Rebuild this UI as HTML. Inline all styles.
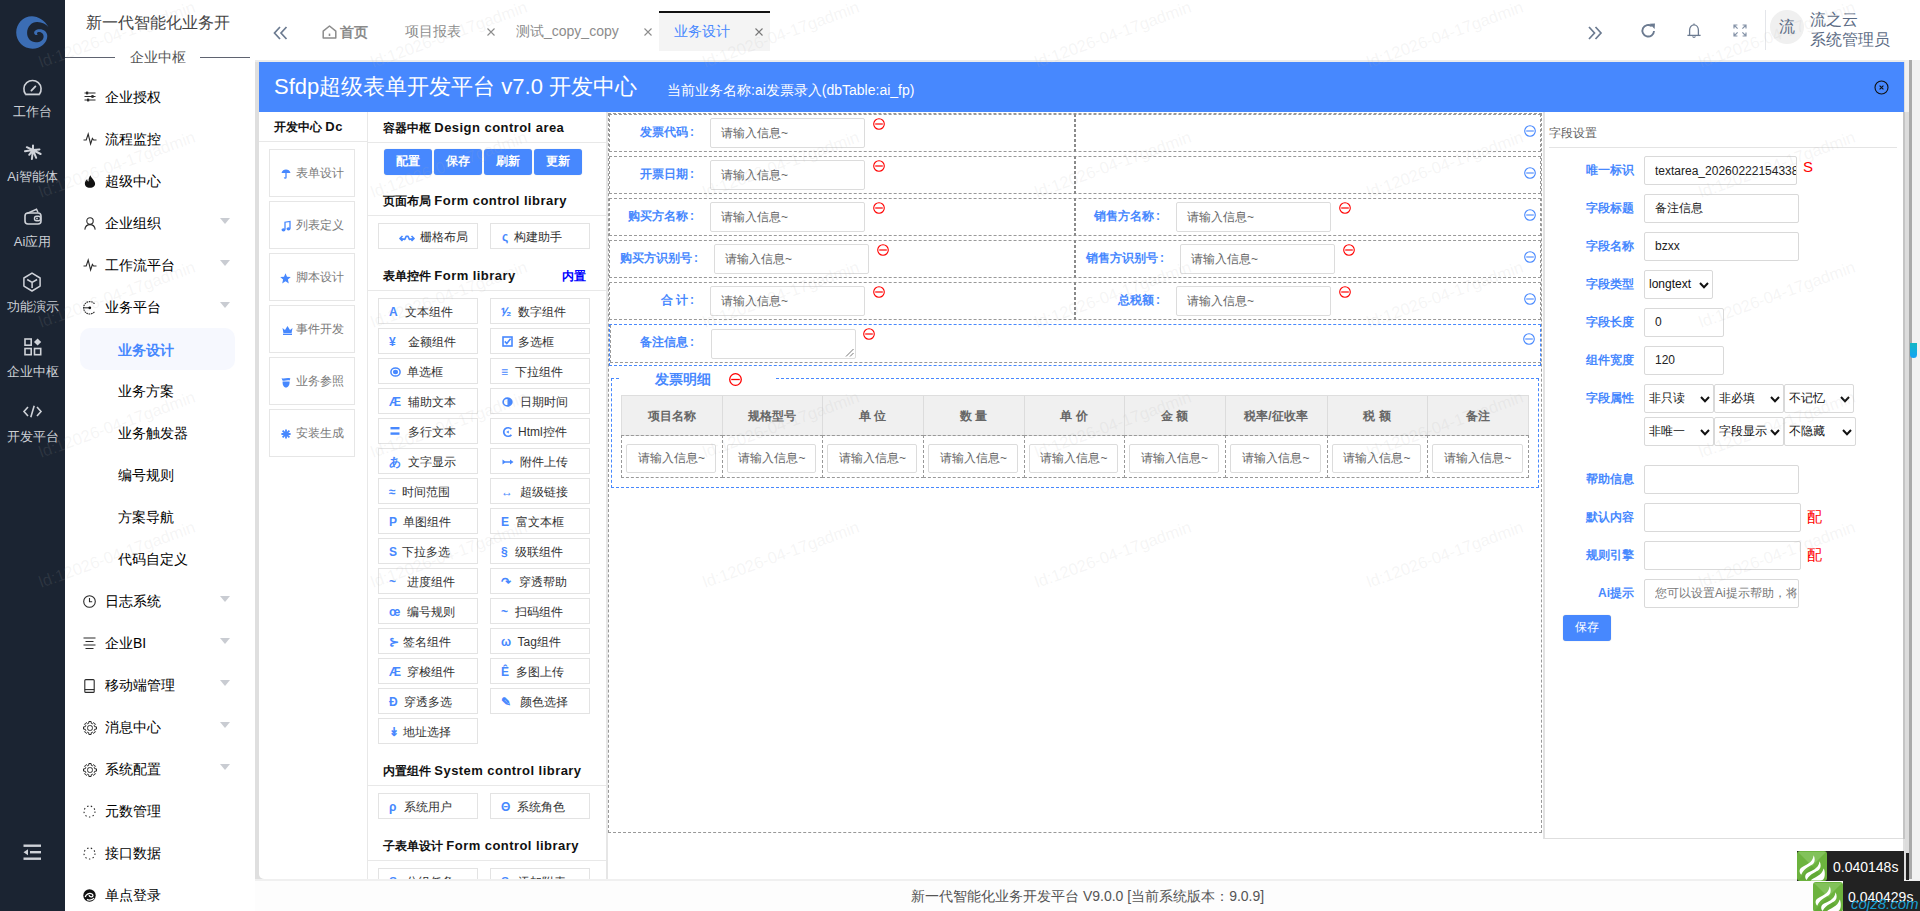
<!DOCTYPE html>
<html><head><meta charset="utf-8">
<style>
*{box-sizing:border-box;margin:0;padding:0}
html,body{width:1920px;height:911px;overflow:hidden;background:#fff;font-family:"Liberation Sans",sans-serif;color:#222}
.a{position:absolute}
.t{position:absolute;white-space:nowrap;line-height:1}
svg{position:absolute;overflow:visible}
/* dark sidebar */
#side{left:0;top:0;width:65px;height:911px;background:#1b2432}
.si{color:#cdd0d6;font-size:13px;width:65px;text-align:center;left:0}
/* secondary sidebar */
.mi{font-size:14px;color:#000;left:105px}
.sm{font-size:14px;color:#000;left:118px}
.arr{position:absolute;left:220px;width:0;height:0;border-left:5.5px solid transparent;border-right:5.5px solid transparent;border-top:6px solid #c9ccd2}
/* header */
.tab{font-size:14px;color:#8c8c8c}
.tx{font-size:14px;color:#8c8c8c}
</style></head><body>

<!-- ============ DARK SIDEBAR ============ -->
<div id="side" class="a">
  <svg style="left:12px;top:12px" width="40" height="40" viewBox="0 0 40 40">
    <path d="M36.4 14.9 C33 8.5 26 4.2 20 4.2 C11.2 4.2 4.2 11.5 4.2 20.5 C4.2 29.5 11.5 36.7 20.5 36.7 C28.5 36.7 35.3 31 35.3 24 C35.3 19.8 31.5 17.2 27.5 17.3 C24 17.4 21.8 19.2 22.2 21.2 C22.5 22.8 24.4 23.6 25.8 22.6 C24.9 22.2 24.6 21.2 25.4 20.6 C27.6 19.2 31.6 21 31.6 24.5 C31.6 28.2 28.2 30.3 24 30.3 C19 30.3 15.1 26.5 15.1 21 C15.1 14.5 19.5 10 25 9.9 C30 9.8 34 12 36.4 14.9 Z" fill="#3b6db4"/>
  </svg>
  <!-- gauge -->
  <svg style="left:23px;top:79px" width="19" height="17" viewBox="0 0 19 17">
    <path d="M2.6 15.2 A8.6 8.6 0 1 1 16.4 15.2" fill="none" stroke="#cfd2d8" stroke-width="1.6"/>
    <path d="M2.2 15.4 H16.8" stroke="#cfd2d8" stroke-width="1.8"/>
    <path d="M8.4 11.6 L12.4 7.4" stroke="#cfd2d8" stroke-width="1.8" stroke-linecap="round"/>
  </svg>
  <div class="t si" style="top:105px">工作台</div>
  <!-- palm -->
  <svg style="left:18px;top:138px" width="30" height="26" viewBox="0 0 30 26">
    <path d="M14.9 12 L7 13.2 M14.9 12 L8.8 9.2 M14.9 12 L15 7.5 M14.9 12 L21.5 11.4 M14.9 12 L22.6 16 M14.9 12 L18.2 19.8 M14.9 12 L13.9 21 M14.9 12 L11.2 16.8" stroke="#d0d3da" stroke-width="2" stroke-linecap="round"/>
  </svg>
  <div class="t si" style="top:170px">Ai智能体</div>
  <!-- wallet -->
  <svg style="left:24px;top:208px" width="18" height="17" viewBox="0 0 18 17">
    <path d="M3 5.5 L12.5 1.2 L14 4.5" fill="none" stroke="#cfd2d8" stroke-width="1.5"/>
    <rect x="1" y="5" width="16" height="11" rx="3" fill="none" stroke="#cfd2d8" stroke-width="1.6"/>
    <rect x="10.5" y="8.2" width="6" height="4.6" rx="2" fill="none" stroke="#cfd2d8" stroke-width="1.4"/>
    <circle cx="13" cy="10.5" r="0.9" fill="#cfd2d8"/>
  </svg>
  <div class="t si" style="top:235px">Ai应用</div>
  <!-- cube -->
  <svg style="left:23px;top:272px" width="18" height="20" viewBox="0 0 18 20"><path d="M9 1.1 L17.1 6 V14.1 L9 19 L0.9 14.1 V6 Z" fill="none" stroke="#d0d3da" stroke-width="1.5" stroke-linejoin="round"/><path d="M4.2 7.5 L9.1 10.3 L14.1 7.5 M9.1 10.3 V16" fill="none" stroke="#d0d3da" stroke-width="1.5"/></svg>
  <div class="t si" style="top:300px">功能演示</div>
  <!-- apps -->
  <svg style="left:24px;top:338px" width="18" height="18" viewBox="0 0 18 18">
    <rect x="1" y="1" width="6.2" height="6.2" fill="none" stroke="#cfd2d8" stroke-width="1.6"/>
    <rect x="1" y="10.5" width="6.2" height="6.2" fill="none" stroke="#cfd2d8" stroke-width="1.6"/>
    <rect x="10.5" y="10.5" width="6.2" height="6.2" fill="none" stroke="#cfd2d8" stroke-width="1.6"/>
    <path d="M13.6 0.4 L17.2 4 L13.6 7.6 L10 4 Z" fill="#cfd2d8"/>
  </svg>
  <div class="t si" style="top:365px">企业中枢</div>
  <!-- code -->
  <svg style="left:23px;top:405px" width="19" height="13" viewBox="0 0 19 13">
    <path d="M5 2 L1 6.5 L5 11 M14 2 L18 6.5 L14 11 M11.2 0.8 L7.8 12.2" fill="none" stroke="#cfd2d8" stroke-width="1.6"/>
  </svg>
  <div class="t si" style="top:430px">开发平台</div>
  <!-- menu fold -->
  <svg style="left:23px;top:844px" width="19" height="17" viewBox="0 0 19 17">
    <rect x="0.5" y="0.5" width="17.5" height="2.4" fill="#cfd2d8"/>
    <rect x="7" y="7" width="11" height="2.4" fill="#cfd2d8"/>
    <rect x="0.5" y="13.5" width="17.5" height="2.4" fill="#cfd2d8"/>
    <path d="M0.5 8.2 L5 5.2 V11.2 Z" fill="#cfd2d8"/>
  </svg>
</div>

<!-- ============ SECONDARY SIDEBAR ============ -->
<div class="t" style="left:86px;top:15px;font-size:16px;color:#444">新一代智能化业务开</div>
<div class="a" style="left:65px;top:57px;width:50px;height:1px;background:#5f6370"></div>
<div class="t" style="left:130px;top:50px;font-size:14px;color:#555">企业中枢</div>
<div class="a" style="left:200px;top:57px;width:50px;height:1px;background:#5f6370"></div>

<div class="t mi" style="top:90px">企业授权</div>
<svg style="left:84px;top:91px" width="12" height="11" viewBox="0 0 12 11"><path d="M0.5 2H11.5M0.5 5.5H11.5M0.5 9H11.5" stroke="#2a2a2a" stroke-width="1.1"/><rect x="2" y="0.6" width="2.2" height="2.8" fill="#2a2a2a"/><rect x="7.4" y="4.1" width="2.2" height="2.8" fill="#2a2a2a"/><rect x="3" y="7.6" width="2.2" height="2.8" fill="#2a2a2a"/></svg>
<div class="t mi" style="top:132px">流程监控</div>
<svg style="left:83px;top:133px" width="14" height="12" viewBox="0 0 14 12"><path d="M0.5 7 H3.2 L5.2 1 L7.6 11 L9.4 5.5 L10.6 7 H13.5" fill="none" stroke="#2a2a2a" stroke-width="1.1"/></svg>
<div class="t mi" style="top:174px">超级中心</div>
<svg style="left:84px;top:175px" width="12" height="13" viewBox="0 0 12 13"><path d="M6.5 0.3 C7 3 10.2 4.6 11 8 C11.6 11 9.2 12.8 6 12.8 C2.6 12.8 0.5 10.8 0.9 7.8 C1.2 5.8 2.4 4.8 3.2 4 C3.2 5.4 3.8 6.2 4.6 6.6 C4.2 4.2 5.2 2 6.5 0.3 Z" fill="#111"/></svg>
<div class="t mi" style="top:216px">企业组织</div>
<svg style="left:84px;top:217px" width="12" height="13" viewBox="0 0 12 13"><circle cx="6" cy="4" r="3.2" fill="none" stroke="#2a2a2a" stroke-width="1.1"/><path d="M0.8 12.6 C1.2 9.4 3.2 7.6 6 7.6 C8.8 7.6 10.8 9.4 11.2 12.6" fill="none" stroke="#2a2a2a" stroke-width="1.1"/></svg>
<div class="arr" style="top:218px"></div>
<div class="t mi" style="top:258px">工作流平台</div>
<svg style="left:83px;top:259px" width="14" height="12" viewBox="0 0 14 12"><path d="M0.5 7 H3.2 L5.2 1 L7.6 11 L9.4 5.5 L10.6 7 H13.5" fill="none" stroke="#2a2a2a" stroke-width="1.1"/></svg>
<div class="arr" style="top:260px"></div>
<div class="t mi" style="top:300px">业务平台</div>
<svg style="left:83px;top:301px" width="14" height="14" viewBox="0 0 14 14"><path d="M11.5 2.75 A6.2 6.2 0 1 0 11.5 10.85" fill="none" stroke="#2a2a2a" stroke-width="1.1" stroke-dasharray="1.6 0.7"/><path d="M0.6 6.8 H6.5" stroke="#2a2a2a" stroke-width="1.1"/><circle cx="6.8" cy="6.8" r="1.4" fill="#111"/></svg>
<div class="arr" style="top:302px"></div>
<div class="a" style="left:80px;top:328px;width:155px;height:42px;border-radius:10px;background:#f6f8fe"></div>
<div class="t" style="left:118px;top:343px;font-size:14px;color:#4788fe;font-weight:bold">业务设计</div>
<div class="t sm" style="top:384px">业务方案</div>
<div class="t sm" style="top:426px">业务触发器</div>
<div class="t sm" style="top:468px">编号规则</div>
<div class="t sm" style="top:510px">方案导航</div>
<div class="t sm" style="top:552px">代码自定义</div>
<div class="t mi" style="top:594px">日志系统</div>
<svg style="left:83px;top:595px" width="13" height="13" viewBox="0 0 13 13"><circle cx="6.5" cy="6.5" r="5.8" fill="none" stroke="#2a2a2a" stroke-width="1.1"/><path d="M6.5 3 V6.8 H9.2" fill="none" stroke="#2a2a2a" stroke-width="1.1"/></svg>
<div class="arr" style="top:596px"></div>
<div class="t mi" style="top:636px">企业BI</div>
<svg style="left:83px;top:637px" width="13" height="13" viewBox="0 0 13 13"><path d="M0.5 1H12.5M2.5 4.5H10.5M0.5 8H12.5M2.5 11.5H10.5" stroke="#2a2a2a" stroke-width="1.1"/></svg>
<div class="arr" style="top:638px"></div>
<div class="t mi" style="top:678px">移动端管理</div>
<svg style="left:84px;top:679px" width="11" height="14" viewBox="0 0 11 14"><rect x="0.8" y="0.6" width="9.4" height="12.8" rx="1" fill="none" stroke="#2a2a2a" stroke-width="1.1"/><path d="M0.8 10.6 H10.2" stroke="#2a2a2a" stroke-width="1.1"/></svg>
<div class="arr" style="top:680px"></div>
<div class="t mi" style="top:720px">消息中心</div>
<svg style="left:83px;top:721px" width="14" height="14" viewBox="0 0 14 14"><path d="M5.74 2.26 L5.88 0.50 L8.12 0.50 L8.26 2.26 L9.46 2.76 L10.81 1.61 L12.39 3.19 L11.24 4.54 L11.74 5.74 L13.50 5.88 L13.50 8.12 L11.74 8.26 L11.24 9.46 L12.39 10.81 L10.81 12.39 L9.46 11.24 L8.26 11.74 L8.12 13.50 L5.88 13.50 L5.74 11.74 L4.54 11.24 L3.19 12.39 L1.61 10.81 L2.76 9.46 L2.26 8.26 L0.50 8.12 L0.50 5.88 L2.26 5.74 L2.76 4.54 L1.61 3.19 L3.19 1.61 L4.54 2.76 Z" fill="none" stroke="#2a2a2a" stroke-width="1" stroke-linejoin="round"/><rect x="4.6" y="4.6" width="4.8" height="4.8" rx="1.8" fill="none" stroke="#2a2a2a" stroke-width="1"/></svg>
<div class="arr" style="top:722px"></div>
<div class="t mi" style="top:762px">系统配置</div>
<svg style="left:83px;top:763px" width="14" height="14" viewBox="0 0 14 14"><path d="M5.74 2.26 L5.88 0.50 L8.12 0.50 L8.26 2.26 L9.46 2.76 L10.81 1.61 L12.39 3.19 L11.24 4.54 L11.74 5.74 L13.50 5.88 L13.50 8.12 L11.74 8.26 L11.24 9.46 L12.39 10.81 L10.81 12.39 L9.46 11.24 L8.26 11.74 L8.12 13.50 L5.88 13.50 L5.74 11.74 L4.54 11.24 L3.19 12.39 L1.61 10.81 L2.76 9.46 L2.26 8.26 L0.50 8.12 L0.50 5.88 L2.26 5.74 L2.76 4.54 L1.61 3.19 L3.19 1.61 L4.54 2.76 Z" fill="none" stroke="#2a2a2a" stroke-width="1" stroke-linejoin="round"/><rect x="4.6" y="4.6" width="4.8" height="4.8" rx="1.8" fill="none" stroke="#2a2a2a" stroke-width="1"/></svg>
<div class="arr" style="top:764px"></div>
<div class="t mi" style="top:804px">元数管理</div>
<svg style="left:83px;top:805px" width="13" height="13" viewBox="0 0 13 13"><circle cx="6.5" cy="6.5" r="5.5" fill="none" stroke="#2a2a2a" stroke-width="1.1" stroke-dasharray="1.4 2.4"/></svg>
<div class="t mi" style="top:846px">接口数据</div>
<svg style="left:83px;top:847px" width="13" height="13" viewBox="0 0 13 13"><circle cx="6.5" cy="6.5" r="5.5" fill="none" stroke="#2a2a2a" stroke-width="1.1" stroke-dasharray="1.4 2.4"/></svg>
<div class="t mi" style="top:888px">单点登录</div>
<svg style="left:83px;top:889px" width="13" height="13" viewBox="0 0 13 13"><circle cx="6.5" cy="6.5" r="6.2" fill="#111"/><path d="M2.2 8 C3 5 6.5 3.6 9 5 C10.4 5.8 10.2 7.6 8.6 7.8 C7 8 5.8 7 6.4 6 M4 10.4 C6 11.6 9.6 11 11 9" fill="none" stroke="#fff" stroke-width="1.3"/></svg>

<!-- light strip -->
<div class="a" style="left:255px;top:60px;width:1650px;height:820px;background:#dfdfdf"></div>

<!-- ============ HEADER ============ -->
<div class="a" style="left:255px;top:60px;width:1665px;height:2px;background:#ececec"></div>


<!-- collapse « -->
<svg style="left:273px;top:26px" width="15" height="14" viewBox="0 0 15 14"><path d="M7 1 L1.5 7 L7 13 M13.5 1 L8 7 L13.5 13" fill="none" stroke="#6b7a90" stroke-width="1.7"/></svg>
<!-- home -->
<svg style="left:322px;top:25px" width="15" height="14" viewBox="0 0 15 14"><path d="M1.2 13 V6.2 L7.5 1 L13.8 6.2 V13 Z" fill="none" stroke="#8c8c8c" stroke-width="1.5" stroke-linejoin="round"/><path d="M7.5 8.6 V11" stroke="#8c8c8c" stroke-width="1.6"/></svg>
<div class="t" style="left:340px;top:25px;font-size:14px;color:#8a8a8a;font-weight:bold">首页</div>
<div class="t tab" style="left:405px;top:24px">项目报表</div>
<svg style="left:487px;top:28px" width="8" height="8" viewBox="0 0 8 8"><path d="M0.5 0.5 L7.5 7.5 M7.5 0.5 L0.5 7.5" stroke="#8c8c8c" stroke-width="1.1"/></svg>
<div class="t tab" style="left:516px;top:24px">测试_copy_copy</div>
<svg style="left:644px;top:28px" width="8" height="8" viewBox="0 0 8 8"><path d="M0.5 0.5 L7.5 7.5 M7.5 0.5 L0.5 7.5" stroke="#8c8c8c" stroke-width="1.1"/></svg>
<div class="a" style="left:659px;top:11px;width:111px;height:40px;background:#f4f4f4;border-top:2px solid #111"></div>
<div class="t" style="left:674px;top:24px;font-size:14px;color:#4788fe">业务设计</div>
<svg style="left:755px;top:28px" width="8" height="8" viewBox="0 0 8 8"><path d="M0.5 0.5 L7.5 7.5 M7.5 0.5 L0.5 7.5" stroke="#777" stroke-width="1.1"/></svg>
<!-- right icons -->
<svg style="left:1588px;top:26px" width="14" height="14" viewBox="0 0 14 14"><path d="M1 1 L6.5 7 L1 13 M7.5 1 L13 7 L7.5 13" fill="none" stroke="#6b7a90" stroke-width="1.7"/></svg>
<svg style="left:1641px;top:23px" width="15" height="15" viewBox="0 0 15 15"><path d="M13 8 A5.8 5.8 0 1 1 10.8 3.2" fill="none" stroke="#6b7a90" stroke-width="1.9"/><path d="M8.6 0.8 L14 0.6 L13.6 6 Z" fill="#6b7a90"/></svg>
<svg style="left:1687px;top:23px" width="14" height="16" viewBox="0 0 14 16"><path d="M2.6 12.2 V7.2 C2.6 4 4.6 1.8 7 1.8 C9.4 1.8 11.4 4 11.4 7.2 V12.2" fill="none" stroke="#6b7a90" stroke-width="1.3"/><path d="M0.4 12.4 H13.6" stroke="#6b7a90" stroke-width="1.3"/><path d="M5.6 13.4 A1.5 1.5 0 0 0 8.4 13.4" fill="none" stroke="#6b7a90" stroke-width="1.2"/><path d="M7 0.6 V1.8" stroke="#6b7a90" stroke-width="1.2"/></svg>
<svg style="left:1733px;top:24px" width="14" height="13" viewBox="0 0 14 13"><path d="M1 4.4 V1 H4.4 M1 1 L4.6 4.6 M13 4.4 V1 H9.6 M13 1 L9.4 4.6 M1 8.6 V12 H4.4 M1 12 L4.6 8.4 M13 8.6 V12 H9.6 M13 12 L9.4 8.4" fill="none" stroke="#8593a8" stroke-width="1.2"/></svg>
<div class="a" style="left:1765px;top:10px;width:1px;height:40px;background:#e4e6ea"></div>
<div class="a" style="left:1770px;top:10px;width:34px;height:34px;border-radius:50%;background:#f0f0f0"></div>
<div class="t" style="left:1779px;top:19px;font-size:16px;color:#5b6b84">流</div>
<div class="t" style="left:1810px;top:12px;font-size:16px;color:#5b6b84">流之云</div>
<div class="t" style="left:1810px;top:32px;font-size:16px;color:#5b6b84">系统管理员</div>


<!-- ============ MAIN BOX ============ -->
<div class="a" style="left:259px;top:62px;width:1645px;height:50px;background:#4788fe"></div>
<div class="t" style="left:274px;top:76px;font-size:22px;color:#fff">Sfdp超级表单开发平台 v7.0 开发中心</div>
<div class="t" style="left:667px;top:83px;font-size:14px;color:#fff">当前业务名称:ai发票录入(dbTable:ai_fp)</div>
<svg style="left:1874px;top:80px" width="15" height="15" viewBox="0 0 15 15"><circle cx="7.5" cy="7.5" r="6.5" fill="none" stroke="#111" stroke-width="1.1"/><path d="M5.6 5.6 L9.4 9.4 M9.4 5.6 L5.6 9.4" stroke="#111" stroke-width="1.1"/></svg>
<!-- content bg white -->
<div class="a" style="left:259px;top:112px;width:1644px;height:767px;background:#fff;border-bottom-left-radius:5px"></div>

<!-- left dev panel -->
<div class="a" style="left:367px;top:112px;width:1px;height:768px;background:#e8e8e8"></div>
<div class="a" style="left:259px;top:141px;width:108px;height:1px;background:#e8e8e8"></div>
<div class="t" style="left:274px;top:120px;font-size:12px;font-weight:bold;color:#111">开发中心 <span style="font-size:13px;letter-spacing:0.45px">Dc</span></div>
<div class="a" style="left:269px;top:149px;width:86px;height:48px;border:1px solid #e6e6e6"></div>
<svg style="left:281px;top:169px" width="10" height="10" viewBox="0 0 10 10"><path d="M0.5 4 C1 1.5 3 0.4 5 0.4 C7 0.4 9 1.5 9.5 4 Z" fill="#4788fe"/><path d="M5 3.5 V8.4 C5 9.4 3.6 9.4 3.4 8.4" fill="none" stroke="#4788fe" stroke-width="1.3"/></svg>
<div class="t" style="left:296px;top:167px;font-size:12px;color:#7a7a7a">表单设计</div>
<div class="a" style="left:269px;top:201px;width:86px;height:48px;border:1px solid #e6e6e6"></div>
<svg style="left:281px;top:221px" width="10" height="11" viewBox="0 0 10 11"><path d="M4 8.5 V1.2 L9 0.4 V7.5" fill="none" stroke="#4788fe" stroke-width="1.3"/><ellipse cx="2.5" cy="8.8" rx="2" ry="1.6" fill="#4788fe"/><ellipse cx="7.5" cy="7.8" rx="2" ry="1.6" fill="#4788fe"/></svg>
<div class="t" style="left:296px;top:219px;font-size:12px;color:#7a7a7a">列表定义</div>
<div class="a" style="left:269px;top:253px;width:86px;height:48px;border:1px solid #e6e6e6"></div>
<svg style="left:280px;top:273px" width="11" height="11" viewBox="0 0 11 11"><path d="M5.5 0.3 L7 3.8 L10.8 4 L7.9 6.5 L8.8 10.4 L5.5 8.3 L2.2 10.4 L3.1 6.5 L0.2 4 L4 3.8 Z" fill="#4788fe"/></svg>
<div class="t" style="left:296px;top:271px;font-size:12px;color:#7a7a7a">脚本设计</div>
<div class="a" style="left:269px;top:305px;width:86px;height:48px;border:1px solid #e6e6e6"></div>
<svg style="left:282px;top:325px" width="11" height="10" viewBox="0 0 11 10"><path d="M0.5 3 L3 5 L5.5 1 L8 5 L10.5 3 L9.6 8 H1.4 Z" fill="#4788fe"/><rect x="1" y="8.6" width="9" height="1.4" fill="#4788fe"/></svg>
<div class="t" style="left:296px;top:323px;font-size:12px;color:#7a7a7a">事件开发</div>
<div class="a" style="left:269px;top:357px;width:86px;height:48px;border:1px solid #e6e6e6"></div>
<svg style="left:281px;top:377px" width="10" height="11" viewBox="0 0 10 11"><path d="M0.6 1 C3 2.5 6 0 9.4 1.4 L8.6 3.6 C6 2.6 3.6 4.6 1.4 3.4 Z M1.6 4.4 H8.6 C8.8 8 7.2 10.4 5 10.4 C2.8 10.4 1.4 8 1.6 4.4 Z" fill="#4788fe"/></svg>
<div class="t" style="left:296px;top:375px;font-size:12px;color:#7a7a7a">业务参照</div>
<div class="a" style="left:269px;top:409px;width:86px;height:48px;border:1px solid #e6e6e6"></div>
<svg style="left:281px;top:429px" width="10" height="10" viewBox="0 0 10 10"><path d="M5 0.4 V9.6 M0.4 5 H9.6 M1.6 1.6 L8.4 8.4 M8.4 1.6 L1.6 8.4" stroke="#4788fe" stroke-width="1.8"/></svg>
<div class="t" style="left:296px;top:427px;font-size:12px;color:#7a7a7a">安装生成</div>

<div class="a" style="left:606px;top:112px;width:2px;height:767px;background:#e6e6e6"></div>
<div class="t" style="left:383px;top:121px;font-size:12px;font-weight:bold;color:#111">容器中枢 <span style="font-size:13px;letter-spacing:0.45px">Design control area</span></div>
<div class="a" style="left:368px;top:142px;width:238px;height:1px;background:#e8e8e8"></div>
<div class="a" style="left:384px;top:149px;width:48px;height:26px;border-radius:3px;background:#4788fe;box-shadow:0 0 1px rgba(0,0,0,.25)"></div><div class="t" style="left:384px;top:155px;width:48px;text-align:center;font-size:12px;color:#fff;font-weight:bold">配置</div>
<div class="a" style="left:434px;top:149px;width:48px;height:26px;border-radius:3px;background:#4788fe;box-shadow:0 0 1px rgba(0,0,0,.25)"></div><div class="t" style="left:434px;top:155px;width:48px;text-align:center;font-size:12px;color:#fff;font-weight:bold">保存</div>
<div class="a" style="left:484px;top:149px;width:48px;height:26px;border-radius:3px;background:#4788fe;box-shadow:0 0 1px rgba(0,0,0,.25)"></div><div class="t" style="left:484px;top:155px;width:48px;text-align:center;font-size:12px;color:#fff;font-weight:bold">刷新</div>
<div class="a" style="left:534px;top:149px;width:48px;height:26px;border-radius:3px;background:#4788fe;box-shadow:0 0 1px rgba(0,0,0,.25)"></div><div class="t" style="left:534px;top:155px;width:48px;text-align:center;font-size:12px;color:#fff;font-weight:bold">更新</div>

<div class="t" style="left:383px;top:194px;font-size:12px;font-weight:bold;color:#111">页面布局 <span style="font-size:13px;letter-spacing:0.45px">Form control library</span></div>
<div class="a" style="left:368px;top:215px;width:238px;height:1px;background:#e8e8e8"></div>
<div class="t" style="left:383px;top:269px;font-size:12px;font-weight:bold;color:#111">表单控件 <span style="font-size:13px;letter-spacing:0.45px">Form library</span></div>
<div class="t" style="left:562px;top:270px;font-size:12px;font-weight:bold;color:#0000ff">内置</div>
<div class="a" style="left:368px;top:290px;width:238px;height:1px;background:#e8e8e8"></div>
<div class="t" style="left:383px;top:764px;font-size:12px;font-weight:bold;color:#111">内置组件 <span style="font-size:13px;letter-spacing:0.45px">System control library</span></div>
<div class="a" style="left:368px;top:785px;width:238px;height:1px;background:#e8e8e8"></div>
<div class="t" style="left:383px;top:839px;font-size:12px;font-weight:bold;color:#111">子表单设计 <span style="font-size:13px;letter-spacing:0.45px">Form control library</span></div>
<div class="a" style="left:368px;top:860px;width:238px;height:1px;background:#e8e8e8"></div>
<div class="a" style="left:378px;top:223px;width:100px;height:26px;border:1px solid #e3e3e3"></div><svg style="left:399px;top:235px" width="16" height="7" viewBox="0 0 16 7"><path d="M3.5 1 L0.9 3.5 L3.5 6 M0.9 3.5 L5.8 4.4 L7.3 1.2 L8.9 1.2 L10.4 4.4 L15.1 3.5 M12.5 1 L15.1 3.5 L12.5 6" fill="none" stroke="#4788fe" stroke-width="1.6" stroke-linejoin="round"/></svg><div class="t" style="left:420px;top:231px;font-size:12px;color:#333">栅格布局</div>
<div class="a" style="left:490px;top:223px;width:100px;height:26px;border:1px solid #e3e3e3"></div><div class="t" style="left:502px;top:231px;font-size:12px;color:#4788fe;font-weight:bold">ς</div><div class="t" style="left:514px;top:231px;font-size:12px;color:#333">构建助手</div>
<div class="a" style="left:378px;top:298px;width:100px;height:26px;border:1px solid #e3e3e3"></div><div class="t" style="left:389px;top:306px;font-size:12px;color:#4788fe;font-weight:bold">A</div><div class="t" style="left:405px;top:306px;font-size:12px;color:#333">文本组件</div>
<div class="a" style="left:490px;top:298px;width:100px;height:26px;border:1px solid #e3e3e3"></div><div class="t" style="left:501px;top:306px;font-size:12px;color:#4788fe;font-weight:bold">⅟₂</div><div class="t" style="left:517.5px;top:306px;font-size:12px;color:#333">数字组件</div>
<div class="a" style="left:378px;top:328px;width:100px;height:26px;border:1px solid #e3e3e3"></div><div class="t" style="left:389px;top:336px;font-size:12px;color:#4788fe;font-weight:bold">¥</div><div class="t" style="left:408px;top:336px;font-size:12px;color:#333">金额组件</div>
<div class="a" style="left:490px;top:328px;width:100px;height:26px;border:1px solid #e3e3e3"></div><svg style="left:502px;top:336px" width="11" height="11" viewBox="0 0 11 11"><rect x="1" y="1" width="9" height="9" fill="none" stroke="#4788fe" stroke-width="1.6"/><path d="M2.8 5.4 L4.8 7.6 L8.6 2.8" fill="none" stroke="#4788fe" stroke-width="1.6"/></svg><div class="t" style="left:518px;top:336px;font-size:12px;color:#333">多选框</div>
<div class="a" style="left:378px;top:358px;width:100px;height:26px;border:1px solid #e3e3e3"></div><svg style="left:390px;top:367px" width="11" height="10" viewBox="0 0 11 10"><ellipse cx="5.5" cy="5" rx="4.6" ry="4.1" fill="none" stroke="#4788fe" stroke-width="1.5"/><ellipse cx="5.5" cy="5" rx="2.6" ry="2.2" fill="#4788fe"/></svg><div class="t" style="left:406.5px;top:366px;font-size:12px;color:#333">单选框</div>
<div class="a" style="left:490px;top:358px;width:100px;height:26px;border:1px solid #e3e3e3"></div><div class="t" style="left:501px;top:366px;font-size:12px;color:#4788fe;font-weight:bold">≡</div><div class="t" style="left:514.5px;top:366px;font-size:12px;color:#333">下拉组件</div>
<div class="a" style="left:378px;top:388px;width:100px;height:26px;border:1px solid #e3e3e3"></div><div class="t" style="left:389px;top:396px;font-size:12px;color:#4788fe;font-weight:bold">Æ</div><div class="t" style="left:407.5px;top:396px;font-size:12px;color:#333">辅助文本</div>
<div class="a" style="left:490px;top:388px;width:100px;height:26px;border:1px solid #e3e3e3"></div><svg style="left:502px;top:397px" width="11" height="10" viewBox="0 0 11 10"><ellipse cx="5.5" cy="5" rx="4.4" ry="3.9" fill="none" stroke="#4788fe" stroke-width="1.6"/><path d="M5.5 1 A4.4 3.9 0 0 1 5.5 9 Z" fill="#4788fe"/></svg><div class="t" style="left:519.5px;top:396px;font-size:12px;color:#333">日期时间</div>
<div class="a" style="left:378px;top:418px;width:100px;height:26px;border:1px solid #e3e3e3"></div><svg style="left:390px;top:426px" width="10" height="10" viewBox="0 0 10 10"><rect x="0.5" y="1" width="9" height="2.4" fill="#4788fe"/><rect x="0.5" y="6.4" width="9" height="2.4" fill="#4788fe"/></svg><div class="t" style="left:407.5px;top:426px;font-size:12px;color:#333">多行文本</div>
<div class="a" style="left:490px;top:418px;width:100px;height:26px;border:1px solid #e3e3e3"></div><svg style="left:502px;top:427px" width="11" height="10" viewBox="0 0 11 10"><path d="M9.4 2.2 A4.4 4.2 0 1 0 9.4 7.8" fill="none" stroke="#4788fe" stroke-width="1.7"/><path d="M4.2 5 L6.8 3.4 L6.8 6.6 Z" fill="#4788fe"/></svg><div class="t" style="left:518px;top:426px;font-size:12px;color:#333">Html控件</div>
<div class="a" style="left:378px;top:448px;width:100px;height:26px;border:1px solid #e3e3e3"></div><div class="t" style="left:389px;top:456px;font-size:12px;color:#4788fe;font-weight:bold">あ</div><div class="t" style="left:407.5px;top:456px;font-size:12px;color:#333">文字显示</div>
<div class="a" style="left:490px;top:448px;width:100px;height:26px;border:1px solid #e3e3e3"></div><svg style="left:502px;top:459px" width="12" height="6" viewBox="0 0 12 6"><path d="M0.5 0.6 L4 3 L0.5 5.4 Z M3 2.2 H9 V3.8 H3 Z M8 0.6 L11.5 3 L8 5.4 Z" fill="#4788fe"/></svg><div class="t" style="left:519.5px;top:456px;font-size:12px;color:#333">附件上传</div>
<div class="a" style="left:378px;top:478px;width:100px;height:26px;border:1px solid #e3e3e3"></div><div class="t" style="left:389px;top:486px;font-size:12px;color:#4788fe;font-weight:bold">≈</div><div class="t" style="left:402px;top:486px;font-size:12px;color:#333">时间范围</div>
<div class="a" style="left:490px;top:478px;width:100px;height:26px;border:1px solid #e3e3e3"></div><div class="t" style="left:501px;top:486px;font-size:12px;color:#4788fe;font-weight:bold">↔</div><div class="t" style="left:519.5px;top:486px;font-size:12px;color:#333">超级链接</div>
<div class="a" style="left:378px;top:508px;width:100px;height:26px;border:1px solid #e3e3e3"></div><div class="t" style="left:389px;top:516px;font-size:12px;color:#4788fe;font-weight:bold">P</div><div class="t" style="left:403px;top:516px;font-size:12px;color:#333">单图组件</div>
<div class="a" style="left:490px;top:508px;width:100px;height:26px;border:1px solid #e3e3e3"></div><div class="t" style="left:501px;top:516px;font-size:12px;color:#4788fe;font-weight:bold">E</div><div class="t" style="left:515.5px;top:516px;font-size:12px;color:#333">富文本框</div>
<div class="a" style="left:378px;top:538px;width:100px;height:26px;border:1px solid #e3e3e3"></div><div class="t" style="left:389px;top:546px;font-size:12px;color:#4788fe;font-weight:bold">S</div><div class="t" style="left:402px;top:546px;font-size:12px;color:#333">下拉多选</div>
<div class="a" style="left:490px;top:538px;width:100px;height:26px;border:1px solid #e3e3e3"></div><div class="t" style="left:501px;top:546px;font-size:12px;color:#4788fe;font-weight:bold">§</div><div class="t" style="left:514.5px;top:546px;font-size:12px;color:#333">级联组件</div>
<div class="a" style="left:378px;top:568px;width:100px;height:26px;border:1px solid #e3e3e3"></div><div class="t" style="left:389px;top:576px;font-size:12px;color:#4788fe;font-weight:bold">~</div><div class="t" style="left:407px;top:576px;font-size:12px;color:#333">进度组件</div>
<div class="a" style="left:490px;top:568px;width:100px;height:26px;border:1px solid #e3e3e3"></div><div class="t" style="left:501px;top:576px;font-size:12px;color:#4788fe;font-weight:bold">↷</div><div class="t" style="left:518.5px;top:576px;font-size:12px;color:#333">穿透帮助</div>
<div class="a" style="left:378px;top:598px;width:100px;height:26px;border:1px solid #e3e3e3"></div><div class="t" style="left:389px;top:606px;font-size:12px;color:#4788fe;font-weight:bold">œ</div><div class="t" style="left:407px;top:606px;font-size:12px;color:#333">编号规则</div>
<div class="a" style="left:490px;top:598px;width:100px;height:26px;border:1px solid #e3e3e3"></div><div class="t" style="left:501px;top:606px;font-size:12px;color:#4788fe;font-weight:bold">~</div><div class="t" style="left:514.5px;top:606px;font-size:12px;color:#333">扫码组件</div>
<div class="a" style="left:378px;top:628px;width:100px;height:26px;border:1px solid #e3e3e3"></div><div class="t" style="left:389px;top:636px;font-size:12px;color:#4788fe;font-weight:bold">⊱</div><div class="t" style="left:402.5px;top:636px;font-size:12px;color:#333">签名组件</div>
<div class="a" style="left:490px;top:628px;width:100px;height:26px;border:1px solid #e3e3e3"></div><div class="t" style="left:501px;top:636px;font-size:12px;color:#4788fe;font-weight:bold">ω</div><div class="t" style="left:517.5px;top:636px;font-size:12px;color:#333">Tag组件</div>
<div class="a" style="left:378px;top:658px;width:100px;height:26px;border:1px solid #e3e3e3"></div><div class="t" style="left:389px;top:666px;font-size:12px;color:#4788fe;font-weight:bold">Æ</div><div class="t" style="left:407px;top:666px;font-size:12px;color:#333">穿梭组件</div>
<div class="a" style="left:490px;top:658px;width:100px;height:26px;border:1px solid #e3e3e3"></div><div class="t" style="left:501px;top:666px;font-size:12px;color:#4788fe;font-weight:bold">Ê</div><div class="t" style="left:515.5px;top:666px;font-size:12px;color:#333">多图上传</div>
<div class="a" style="left:378px;top:688px;width:100px;height:26px;border:1px solid #e3e3e3"></div><div class="t" style="left:389px;top:696px;font-size:12px;color:#4788fe;font-weight:bold">Ð</div><div class="t" style="left:403.5px;top:696px;font-size:12px;color:#333">穿透多选</div>
<div class="a" style="left:490px;top:688px;width:100px;height:26px;border:1px solid #e3e3e3"></div><div class="t" style="left:501px;top:696px;font-size:12px;color:#4788fe;font-weight:bold">✎</div><div class="t" style="left:519.5px;top:696px;font-size:12px;color:#333">颜色选择</div>
<div class="a" style="left:378px;top:718px;width:100px;height:26px;border:1px solid #e3e3e3"></div><div class="t" style="left:389px;top:726px;font-size:12px;color:#4788fe;font-weight:bold">↡</div><div class="t" style="left:402.5px;top:726px;font-size:12px;color:#333">地址选择</div>
<div class="a" style="left:378px;top:793px;width:100px;height:26px;border:1px solid #e3e3e3"></div><div class="t" style="left:389px;top:801px;font-size:12px;color:#4788fe;font-weight:bold">ρ</div><div class="t" style="left:404px;top:801px;font-size:12px;color:#333">系统用户</div>
<div class="a" style="left:490px;top:793px;width:100px;height:26px;border:1px solid #e3e3e3"></div><div class="t" style="left:501px;top:801px;font-size:12px;color:#4788fe;font-weight:bold">Θ</div><div class="t" style="left:516.5px;top:801px;font-size:12px;color:#333">系统角色</div>
<div class="a" style="left:378px;top:868px;width:100px;height:26px;border:1px solid #e3e3e3"></div><div class="t" style="left:389px;top:876px;font-size:12px;color:#4788fe;font-weight:bold">S</div><div class="t" style="left:406px;top:876px;font-size:12px;color:#333">分组任务</div>
<div class="a" style="left:490px;top:868px;width:100px;height:26px;border:1px solid #e3e3e3"></div><div class="t" style="left:501px;top:876px;font-size:12px;color:#4788fe;font-weight:bold">S</div><div class="t" style="left:518px;top:876px;font-size:12px;color:#333">添加附表</div>


<!-- ============ CANVAS ============ -->
<div class="a" style="left:608px;top:113px;width:934px;height:720px;border:1px dashed #999"></div>
<div class="a" style="left:609px;top:114px;width:932px;height:38px;border:1px dashed #999"></div>
<div class="a" style="left:1074px;top:114px;width:2px;height:38px;background:repeating-linear-gradient(#8a8a8a 0 3px,transparent 3px 5px)"></div>
<div class="t" style="right:1226px;top:126px;font-size:12px;font-weight:bold;color:#4788fe">发票代码<span style="margin-left:2px">:</span></div>
<div class="a" style="left:710px;top:118px;width:155px;height:30px;border:1px solid #dcdcdc;border-radius:2px"></div>
<div class="t" style="left:721px;top:127px;font-size:12px;color:#656565">请输入信息~</div>
<svg style="left:873px;top:118px" width="12" height="12" viewBox="0 0 12 12"><circle cx="6.0" cy="6.0" r="5.3" fill="none" stroke="#f00" stroke-width="1.1"/><path d="M2.2 6.0 H9.8" stroke="#f00" stroke-width="1.2"/></svg>
<svg style="left:1524px;top:125px" width="12" height="12" viewBox="0 0 12 12"><circle cx="6.0" cy="6.0" r="5.3" fill="none" stroke="#4788fe" stroke-width="1.1"/><path d="M2.2 6.0 H9.8" stroke="#4788fe" stroke-width="1.1"/></svg>
<div class="a" style="left:609px;top:156px;width:932px;height:38px;border:1px dashed #999;border-top:1px dashed #999"></div>
<div class="a" style="left:1074px;top:156px;width:2px;height:38px;background:repeating-linear-gradient(#8a8a8a 0 3px,transparent 3px 5px)"></div>
<div class="t" style="right:1226px;top:168px;font-size:12px;font-weight:bold;color:#4788fe">开票日期<span style="margin-left:2px">:</span></div>
<div class="a" style="left:710px;top:160px;width:155px;height:30px;border:1px solid #dcdcdc;border-radius:2px"></div>
<div class="t" style="left:721px;top:169px;font-size:12px;color:#656565">请输入信息~</div>
<svg style="left:873px;top:160px" width="12" height="12" viewBox="0 0 12 12"><circle cx="6.0" cy="6.0" r="5.3" fill="none" stroke="#f00" stroke-width="1.1"/><path d="M2.2 6.0 H9.8" stroke="#f00" stroke-width="1.2"/></svg>
<svg style="left:1524px;top:167px" width="12" height="12" viewBox="0 0 12 12"><circle cx="6.0" cy="6.0" r="5.3" fill="none" stroke="#4788fe" stroke-width="1.1"/><path d="M2.2 6.0 H9.8" stroke="#4788fe" stroke-width="1.1"/></svg>
<div class="a" style="left:609px;top:198px;width:932px;height:38px;border:1px dashed #999;border-top:1px dashed #999"></div>
<div class="a" style="left:1074px;top:198px;width:2px;height:38px;background:repeating-linear-gradient(#8a8a8a 0 3px,transparent 3px 5px)"></div>
<div class="t" style="right:1226px;top:210px;font-size:12px;font-weight:bold;color:#4788fe">购买方名称<span style="margin-left:2px">:</span></div>
<div class="a" style="left:710px;top:202px;width:155px;height:30px;border:1px solid #dcdcdc;border-radius:2px"></div>
<div class="t" style="left:721px;top:211px;font-size:12px;color:#656565">请输入信息~</div>
<svg style="left:873px;top:202px" width="12" height="12" viewBox="0 0 12 12"><circle cx="6.0" cy="6.0" r="5.3" fill="none" stroke="#f00" stroke-width="1.1"/><path d="M2.2 6.0 H9.8" stroke="#f00" stroke-width="1.2"/></svg>
<div class="t" style="right:760px;top:210px;font-size:12px;font-weight:bold;color:#4788fe">销售方名称<span style="margin-left:2px">:</span></div>
<div class="a" style="left:1176px;top:202px;width:155px;height:30px;border:1px solid #dcdcdc;border-radius:2px"></div>
<div class="t" style="left:1187px;top:211px;font-size:12px;color:#656565">请输入信息~</div>
<svg style="left:1339px;top:202px" width="12" height="12" viewBox="0 0 12 12"><circle cx="6.0" cy="6.0" r="5.3" fill="none" stroke="#f00" stroke-width="1.1"/><path d="M2.2 6.0 H9.8" stroke="#f00" stroke-width="1.2"/></svg>
<svg style="left:1524px;top:209px" width="12" height="12" viewBox="0 0 12 12"><circle cx="6.0" cy="6.0" r="5.3" fill="none" stroke="#4788fe" stroke-width="1.1"/><path d="M2.2 6.0 H9.8" stroke="#4788fe" stroke-width="1.1"/></svg>
<div class="a" style="left:609px;top:240px;width:932px;height:38px;border:1px dashed #999;border-top:1px dashed #999"></div>
<div class="a" style="left:1074px;top:240px;width:2px;height:38px;background:repeating-linear-gradient(#8a8a8a 0 3px,transparent 3px 5px)"></div>
<div class="t" style="right:1222px;top:252px;font-size:12px;font-weight:bold;color:#4788fe">购买方识别号<span style="margin-left:2px">:</span></div>
<div class="a" style="left:714px;top:244px;width:155px;height:30px;border:1px solid #dcdcdc;border-radius:2px"></div>
<div class="t" style="left:725px;top:253px;font-size:12px;color:#656565">请输入信息~</div>
<svg style="left:877px;top:244px" width="12" height="12" viewBox="0 0 12 12"><circle cx="6.0" cy="6.0" r="5.3" fill="none" stroke="#f00" stroke-width="1.1"/><path d="M2.2 6.0 H9.8" stroke="#f00" stroke-width="1.2"/></svg>
<div class="t" style="right:756px;top:252px;font-size:12px;font-weight:bold;color:#4788fe">销售方识别号<span style="margin-left:2px">:</span></div>
<div class="a" style="left:1180px;top:244px;width:155px;height:30px;border:1px solid #dcdcdc;border-radius:2px"></div>
<div class="t" style="left:1191px;top:253px;font-size:12px;color:#656565">请输入信息~</div>
<svg style="left:1343px;top:244px" width="12" height="12" viewBox="0 0 12 12"><circle cx="6.0" cy="6.0" r="5.3" fill="none" stroke="#f00" stroke-width="1.1"/><path d="M2.2 6.0 H9.8" stroke="#f00" stroke-width="1.2"/></svg>
<svg style="left:1524px;top:251px" width="12" height="12" viewBox="0 0 12 12"><circle cx="6.0" cy="6.0" r="5.3" fill="none" stroke="#4788fe" stroke-width="1.1"/><path d="M2.2 6.0 H9.8" stroke="#4788fe" stroke-width="1.1"/></svg>
<div class="a" style="left:609px;top:282px;width:932px;height:38px;border:1px dashed #999;border-top:1px dashed #999"></div>
<div class="a" style="left:1074px;top:282px;width:2px;height:38px;background:repeating-linear-gradient(#8a8a8a 0 3px,transparent 3px 5px)"></div>
<div class="t" style="right:1226px;top:294px;font-size:12px;font-weight:bold;color:#4788fe">合 计<span style="margin-left:2px">:</span></div>
<div class="a" style="left:710px;top:286px;width:155px;height:30px;border:1px solid #dcdcdc;border-radius:2px"></div>
<div class="t" style="left:721px;top:295px;font-size:12px;color:#656565">请输入信息~</div>
<svg style="left:873px;top:286px" width="12" height="12" viewBox="0 0 12 12"><circle cx="6.0" cy="6.0" r="5.3" fill="none" stroke="#f00" stroke-width="1.1"/><path d="M2.2 6.0 H9.8" stroke="#f00" stroke-width="1.2"/></svg>
<div class="t" style="right:760px;top:294px;font-size:12px;font-weight:bold;color:#4788fe">总税额<span style="margin-left:2px">:</span></div>
<div class="a" style="left:1176px;top:286px;width:155px;height:30px;border:1px solid #dcdcdc;border-radius:2px"></div>
<div class="t" style="left:1187px;top:295px;font-size:12px;color:#656565">请输入信息~</div>
<svg style="left:1339px;top:286px" width="12" height="12" viewBox="0 0 12 12"><circle cx="6.0" cy="6.0" r="5.3" fill="none" stroke="#f00" stroke-width="1.1"/><path d="M2.2 6.0 H9.8" stroke="#f00" stroke-width="1.2"/></svg>
<svg style="left:1524px;top:293px" width="12" height="12" viewBox="0 0 12 12"><circle cx="6.0" cy="6.0" r="5.3" fill="none" stroke="#4788fe" stroke-width="1.1"/><path d="M2.2 6.0 H9.8" stroke="#4788fe" stroke-width="1.1"/></svg>

<div class="a" style="left:609px;top:324px;width:932px;height:42px;border:1px dashed #4788fe"></div>
<div class="a" style="left:610px;top:325px;width:931px;height:38px;border-left:1px dashed #999;border-bottom:1px dashed #999"></div>
<div class="t" style="right:1226px;top:336px;font-size:12px;font-weight:bold;color:#4788fe">备注信息<span style="margin-left:2px">:</span></div>
<div class="a" style="left:711px;top:329px;width:145px;height:30px;border:1px solid #dcdcdc;border-radius:2px"></div>
<svg style="left:845px;top:348px" width="9" height="9" viewBox="0 0 9 9"><path d="M8.5 1 L1 8.5 M8.5 5 L5 8.5" stroke="#777" stroke-width="1"/></svg>
<svg style="left:863px;top:328px" width="12" height="12" viewBox="0 0 12 12"><circle cx="6.0" cy="6.0" r="5.3" fill="none" stroke="#f00" stroke-width="1.1"/><path d="M2.2 6.0 H9.8" stroke="#f00" stroke-width="1.2"/></svg><svg style="left:1523px;top:333px" width="12" height="12" viewBox="0 0 12 12"><circle cx="6.0" cy="6.0" r="5.3" fill="none" stroke="#4788fe" stroke-width="1.1"/><path d="M2.2 6.0 H9.8" stroke="#4788fe" stroke-width="1.1"/></svg>
<!-- fieldset -->
<div class="a" style="left:611px;top:378px;width:928px;height:110px;border:1px dashed #4788fe"></div>
<div class="a" style="left:619px;top:376px;width:157px;height:4px;background:#fff"></div>
<div class="t" style="left:655px;top:372px;font-size:14px;font-weight:bold;color:#4788fe">发票明细</div>
<svg style="left:729px;top:373px" width="13" height="13" viewBox="0 0 13 13"><circle cx="6.5" cy="6.5" r="5.8" fill="none" stroke="#f00" stroke-width="1.3"/><path d="M2.2 6.5 H10.8" stroke="#f00" stroke-width="1.3"/></svg>
<div class="a" style="left:621px;top:395px;width:908px;height:41px;background:#f0f0f0;border:1px solid #dedede"></div>
<div class="t" style="left:621px;top:410px;width:101px;text-align:center;font-size:12px;font-weight:bold;color:#666">项目名称</div>
<div class="a" style="left:621px;top:435px;width:102px;height:43px;border:1px dashed #999"></div>
<div class="a" style="left:626px;top:444px;width:90px;height:29px;border:1px solid #dcdcdc;border-radius:2px"></div>
<div class="t" style="left:621px;top:452px;width:101px;text-align:center;font-size:12px;color:#656565">请输入信息~</div>
<div class="a" style="left:722px;top:396px;width:1px;height:40px;background:#dcdcdc"></div>
<div class="t" style="left:722px;top:410px;width:100px;text-align:center;font-size:12px;font-weight:bold;color:#666">规格型号</div>
<div class="a" style="left:722px;top:435px;width:101px;height:43px;border:1px dashed #999"></div>
<div class="a" style="left:727px;top:444px;width:89px;height:29px;border:1px solid #dcdcdc;border-radius:2px"></div>
<div class="t" style="left:722px;top:452px;width:100px;text-align:center;font-size:12px;color:#656565">请输入信息~</div>
<div class="a" style="left:822px;top:396px;width:1px;height:40px;background:#dcdcdc"></div>
<div class="t" style="left:822px;top:410px;width:101px;text-align:center;font-size:12px;font-weight:bold;color:#666">单 位</div>
<div class="a" style="left:822px;top:435px;width:102px;height:43px;border:1px dashed #999"></div>
<div class="a" style="left:827px;top:444px;width:90px;height:29px;border:1px solid #dcdcdc;border-radius:2px"></div>
<div class="t" style="left:822px;top:452px;width:101px;text-align:center;font-size:12px;color:#656565">请输入信息~</div>
<div class="a" style="left:923px;top:396px;width:1px;height:40px;background:#dcdcdc"></div>
<div class="t" style="left:923px;top:410px;width:101px;text-align:center;font-size:12px;font-weight:bold;color:#666">数 量</div>
<div class="a" style="left:923px;top:435px;width:102px;height:43px;border:1px dashed #999"></div>
<div class="a" style="left:928px;top:444px;width:90px;height:29px;border:1px solid #dcdcdc;border-radius:2px"></div>
<div class="t" style="left:923px;top:452px;width:101px;text-align:center;font-size:12px;color:#656565">请输入信息~</div>
<div class="a" style="left:1024px;top:396px;width:1px;height:40px;background:#dcdcdc"></div>
<div class="t" style="left:1024px;top:410px;width:100px;text-align:center;font-size:12px;font-weight:bold;color:#666">单 价</div>
<div class="a" style="left:1024px;top:435px;width:101px;height:43px;border:1px dashed #999"></div>
<div class="a" style="left:1029px;top:444px;width:89px;height:29px;border:1px solid #dcdcdc;border-radius:2px"></div>
<div class="t" style="left:1024px;top:452px;width:100px;text-align:center;font-size:12px;color:#656565">请输入信息~</div>
<div class="a" style="left:1124px;top:396px;width:1px;height:40px;background:#dcdcdc"></div>
<div class="t" style="left:1124px;top:410px;width:101px;text-align:center;font-size:12px;font-weight:bold;color:#666">金 额</div>
<div class="a" style="left:1124px;top:435px;width:102px;height:43px;border:1px dashed #999"></div>
<div class="a" style="left:1129px;top:444px;width:90px;height:29px;border:1px solid #dcdcdc;border-radius:2px"></div>
<div class="t" style="left:1124px;top:452px;width:101px;text-align:center;font-size:12px;color:#656565">请输入信息~</div>
<div class="a" style="left:1225px;top:396px;width:1px;height:40px;background:#dcdcdc"></div>
<div class="t" style="left:1225px;top:410px;width:102px;text-align:center;font-size:12px;font-weight:bold;color:#666">税率/征收率</div>
<div class="a" style="left:1225px;top:435px;width:103px;height:43px;border:1px dashed #999"></div>
<div class="a" style="left:1230px;top:444px;width:91px;height:29px;border:1px solid #dcdcdc;border-radius:2px"></div>
<div class="t" style="left:1225px;top:452px;width:102px;text-align:center;font-size:12px;color:#656565">请输入信息~</div>
<div class="a" style="left:1327px;top:396px;width:1px;height:40px;background:#dcdcdc"></div>
<div class="t" style="left:1327px;top:410px;width:100px;text-align:center;font-size:12px;font-weight:bold;color:#666">税 额</div>
<div class="a" style="left:1327px;top:435px;width:101px;height:43px;border:1px dashed #999"></div>
<div class="a" style="left:1332px;top:444px;width:89px;height:29px;border:1px solid #dcdcdc;border-radius:2px"></div>
<div class="t" style="left:1327px;top:452px;width:100px;text-align:center;font-size:12px;color:#656565">请输入信息~</div>
<div class="a" style="left:1427px;top:396px;width:1px;height:40px;background:#dcdcdc"></div>
<div class="t" style="left:1427px;top:410px;width:102px;text-align:center;font-size:12px;font-weight:bold;color:#666">备注</div>
<div class="a" style="left:1427px;top:435px;width:102px;height:43px;border:1px dashed #999"></div>
<div class="a" style="left:1432px;top:444px;width:91px;height:29px;border:1px solid #dcdcdc;border-radius:2px"></div>
<div class="t" style="left:1427px;top:452px;width:102px;text-align:center;font-size:12px;color:#656565">请输入信息~</div>


<!-- ============ RIGHT PANEL ============ -->
<div class="a" style="left:1543px;top:112px;width:360px;height:727px;border-left:2px solid #e2e2e2;border-bottom:1px solid #dedede"></div>
<div class="t" style="left:1549px;top:127px;font-size:12px;color:#5e5e5e">字段设置</div>
<div class="a" style="left:1549px;top:147px;width:348px;height:1px;background:#e4e4e4"></div>
<div class="t" style="right:286px;top:164px;font-size:12px;font-weight:bold;color:#4788fe">唯一标识</div>
<div class="a" style="left:1644px;top:156px;width:153px;height:29px;border:1px solid #d9d9d9;border-radius:2px;overflow:hidden"></div>
<div class="t" style="left:1655px;top:164px;font-size:12px;color:#222;width:141px;overflow:hidden;line-height:14px">textarea_20260222154338</div>
<div class="t" style="left:1803px;top:159px;font-size:15px;color:#f00">S</div>
<div class="t" style="right:286px;top:202px;font-size:12px;font-weight:bold;color:#4788fe">字段标题</div>
<div class="a" style="left:1644px;top:194px;width:155px;height:29px;border:1px solid #d9d9d9;border-radius:2px;overflow:hidden"></div>
<div class="t" style="left:1655px;top:202px;font-size:12px;color:#222;width:142px;overflow:hidden">备注信息</div>
<div class="t" style="right:286px;top:240px;font-size:12px;font-weight:bold;color:#4788fe">字段名称</div>
<div class="a" style="left:1644px;top:232px;width:155px;height:29px;border:1px solid #d9d9d9;border-radius:2px;overflow:hidden"></div>
<div class="t" style="left:1655px;top:240px;font-size:12px;color:#222;width:142px;overflow:hidden">bzxx</div>
<div class="t" style="right:286px;top:278px;font-size:12px;font-weight:bold;color:#4788fe">字段类型</div>
<div class="a" style="left:1644px;top:270px;width:69px;height:29px;border:1px solid #d9d9d9;border-radius:2px"></div>
<div class="t" style="left:1649px;top:278px;font-size:12px;color:#111">longtext</div>
<svg style="left:1699px;top:282px" width="10" height="7" viewBox="0 0 10 7"><path d="M1 1 L5 5.2 L9 1" fill="none" stroke="#111" stroke-width="2"/></svg>
<div class="t" style="right:286px;top:316px;font-size:12px;font-weight:bold;color:#4788fe">字段长度</div>
<div class="a" style="left:1644px;top:308px;width:80px;height:29px;border:1px solid #d9d9d9;border-radius:2px;overflow:hidden"></div>
<div class="t" style="left:1655px;top:316px;font-size:12px;color:#222;width:67px;overflow:hidden">0</div>
<div class="t" style="right:286px;top:354px;font-size:12px;font-weight:bold;color:#4788fe">组件宽度</div>
<div class="a" style="left:1644px;top:346px;width:80px;height:29px;border:1px solid #d9d9d9;border-radius:2px;overflow:hidden"></div>
<div class="t" style="left:1655px;top:354px;font-size:12px;color:#222;width:67px;overflow:hidden">120</div>
<div class="t" style="right:286px;top:392px;font-size:12px;font-weight:bold;color:#4788fe">字段属性</div>
<div class="a" style="left:1644px;top:384px;width:70px;height:29px;border:1px solid #d9d9d9;border-radius:2px"></div>
<div class="t" style="left:1649px;top:392px;font-size:12px;color:#111">非只读</div>
<svg style="left:1700px;top:396px" width="10" height="7" viewBox="0 0 10 7"><path d="M1 1 L5 5.2 L9 1" fill="none" stroke="#111" stroke-width="2"/></svg>
<div class="a" style="left:1714px;top:384px;width:70px;height:29px;border:1px solid #d9d9d9;border-radius:2px"></div>
<div class="t" style="left:1719px;top:392px;font-size:12px;color:#111">非必填</div>
<svg style="left:1770px;top:396px" width="10" height="7" viewBox="0 0 10 7"><path d="M1 1 L5 5.2 L9 1" fill="none" stroke="#111" stroke-width="2"/></svg>
<div class="a" style="left:1784px;top:384px;width:70px;height:29px;border:1px solid #d9d9d9;border-radius:2px"></div>
<div class="t" style="left:1789px;top:392px;font-size:12px;color:#111">不记忆</div>
<svg style="left:1840px;top:396px" width="10" height="7" viewBox="0 0 10 7"><path d="M1 1 L5 5.2 L9 1" fill="none" stroke="#111" stroke-width="2"/></svg>
<div class="a" style="left:1644px;top:417px;width:70px;height:29px;border:1px solid #d9d9d9;border-radius:2px"></div>
<div class="t" style="left:1649px;top:425px;font-size:12px;color:#111">非唯一</div>
<svg style="left:1700px;top:429px" width="10" height="7" viewBox="0 0 10 7"><path d="M1 1 L5 5.2 L9 1" fill="none" stroke="#111" stroke-width="2"/></svg>
<div class="a" style="left:1714px;top:417px;width:70px;height:29px;border:1px solid #d9d9d9;border-radius:2px"></div>
<div class="t" style="left:1719px;top:425px;font-size:12px;color:#111">字段显示</div>
<svg style="left:1770px;top:429px" width="10" height="7" viewBox="0 0 10 7"><path d="M1 1 L5 5.2 L9 1" fill="none" stroke="#111" stroke-width="2"/></svg>
<div class="a" style="left:1784px;top:417px;width:72px;height:29px;border:1px solid #d9d9d9;border-radius:2px"></div>
<div class="t" style="left:1789px;top:425px;font-size:12px;color:#111">不隐藏</div>
<svg style="left:1842px;top:429px" width="10" height="7" viewBox="0 0 10 7"><path d="M1 1 L5 5.2 L9 1" fill="none" stroke="#111" stroke-width="2"/></svg>
<div class="t" style="right:286px;top:473px;font-size:12px;font-weight:bold;color:#4788fe">帮助信息</div>
<div class="a" style="left:1644px;top:465px;width:155px;height:29px;border:1px solid #d9d9d9;border-radius:2px;overflow:hidden"></div>
<div class="t" style="right:286px;top:511px;font-size:12px;font-weight:bold;color:#4788fe">默认内容</div>
<div class="a" style="left:1644px;top:503px;width:157px;height:29px;border:1px solid #d9d9d9;border-radius:2px;overflow:hidden"></div>
<div class="t" style="left:1807px;top:509px;font-size:15px;color:#f00">配</div>
<div class="t" style="right:286px;top:549px;font-size:12px;font-weight:bold;color:#4788fe">规则引擎</div>
<div class="a" style="left:1644px;top:541px;width:157px;height:29px;border:1px solid #d9d9d9;border-radius:2px;overflow:hidden"></div>
<div class="t" style="left:1807px;top:547px;font-size:15px;color:#f00">配</div>
<div class="t" style="right:286px;top:587px;font-size:12px;font-weight:bold;color:#4788fe">Ai提示</div>
<div class="a" style="left:1644px;top:579px;width:155px;height:29px;border:1px solid #d9d9d9;border-radius:2px;overflow:hidden"></div>
<div class="t" style="left:1655px;top:587px;font-size:12px;color:#777;width:142px;overflow:hidden">您可以设置Ai提示帮助，将</div>
<div class="a" style="left:1563px;top:615px;width:48px;height:26px;border-radius:3px;background:#4788fe;box-shadow:0 0 1px rgba(0,0,0,.3)"></div><div class="t" style="left:1563px;top:621px;width:48px;text-align:center;font-size:12px;color:#fff">保存</div>

<div class="a" style="left:1903px;top:112px;width:2px;height:727px;background:#c4c4c4"></div>
<div class="a" style="left:1905px;top:60px;width:15px;height:820px;background:#f1f1f1"></div>
<div class="a" style="left:1905px;top:112px;width:4px;height:768px;background:#dcdcdc"></div>
<div class="a" style="left:1909px;top:60px;width:3px;height:820px;background:#a9a9a9"></div>
<div class="a" style="left:1910px;top:343px;width:7px;height:15px;border-radius:0 0 4px 4px;background:linear-gradient(#14b8c4,#12a2f5)"></div>
<!-- footer -->
<div class="a" style="left:255px;top:879px;width:1665px;height:32px;background:#fdfdfd;border-top:2px solid #f0f0f0"></div>
<div class="t" style="left:911px;top:889px;font-size:14px;color:#555">新一代智能化业务开发平台 V9.0.0 [当前系统版本：9.0.9]</div>
<!-- perf badges -->
<div class="a" style="left:1797px;top:851px;width:107px;height:30px;background:#222"></div>
<div class="a" style="left:1906px;top:853px;width:3px;height:27px;background:#222"></div>
<svg style="left:1797px;top:851px" width="30" height="30" viewBox="0 0 30 30"><rect width="30" height="30" rx="3" fill="#6cb33e"/><path d="M1 1 L15 15 L29 1 Z" fill="#82c25a"/><path d="M1 29 L15 15 L29 29 Z" fill="#62a936"/><path d="M16.7 4.3 C18 7 18.2 10.6 16.4 12.6 C13.8 15.2 8 16.2 4.2 23.7 C2.2 21.6 1.8 18.2 4.6 16.4 C8.6 13.8 15.6 12.4 16.7 4.3 Z M22.6 10.3 C24 13 24.2 16.6 22.2 18.6 C19.4 21.4 13.6 22 9.6 29 C7.6 27 7.6 23.6 10.6 21.8 C14.4 19.6 21.4 18.4 22.6 10.3 Z M26.7 17.4 C28.2 20 28.4 26 26.2 28.6 C25 29.8 23 29.6 13.6 29.6 C17 25.6 24.6 25.2 26.7 17.4 Z" fill="#fff"/></svg>
<div class="t" style="left:1833px;top:860px;font-size:14px;color:#fff">0.040148s</div>
<div class="a" style="left:1843px;top:881px;width:77px;height:30px;background:#222"></div>
<svg style="left:1813px;top:882px" width="30" height="30" viewBox="0 0 30 30"><rect width="30" height="30" rx="3" fill="#6cb33e"/><path d="M1 1 L15 15 L29 1 Z" fill="#82c25a"/><path d="M1 29 L15 15 L29 29 Z" fill="#62a936"/><path d="M16.7 4.3 C18 7 18.2 10.6 16.4 12.6 C13.8 15.2 8 16.2 4.2 23.7 C2.2 21.6 1.8 18.2 4.6 16.4 C8.6 13.8 15.6 12.4 16.7 4.3 Z M22.6 10.3 C24 13 24.2 16.6 22.2 18.6 C19.4 21.4 13.6 22 9.6 29 C7.6 27 7.6 23.6 10.6 21.8 C14.4 19.6 21.4 18.4 22.6 10.3 Z M26.7 17.4 C28.2 20 28.4 26 26.2 28.6 C25 29.8 23 29.6 13.6 29.6 C17 25.6 24.6 25.2 26.7 17.4 Z" fill="#fff"/></svg>
<div class="t" style="left:1848px;top:890px;font-size:14px;color:#fff">0.040429s</div>
<div class="t" style="left:1851px;top:896px;font-size:15px;color:#1a9ed0;font-style:italic">cojz8.com</div>

<div class="a" style="left:0;top:0;width:1920px;height:911px;pointer-events:none;overflow:hidden">
<div class="t" style="left:42px;top:55px;font-size:16.5px;line-height:15px;color:rgba(175,175,175,0.13);transform:rotate(-20deg);transform-origin:0 100%">ld:12026-04-17gadmin</div>
<div class="t" style="left:374px;top:55px;font-size:16.5px;line-height:15px;color:rgba(175,175,175,0.13);transform:rotate(-20deg);transform-origin:0 100%">ld:12026-04-17gadmin</div>
<div class="t" style="left:706px;top:55px;font-size:16.5px;line-height:15px;color:rgba(175,175,175,0.13);transform:rotate(-20deg);transform-origin:0 100%">ld:12026-04-17gadmin</div>
<div class="t" style="left:1038px;top:55px;font-size:16.5px;line-height:15px;color:rgba(175,175,175,0.13);transform:rotate(-20deg);transform-origin:0 100%">ld:12026-04-17gadmin</div>
<div class="t" style="left:1370px;top:55px;font-size:16.5px;line-height:15px;color:rgba(175,175,175,0.13);transform:rotate(-20deg);transform-origin:0 100%">ld:12026-04-17gadmin</div>
<div class="t" style="left:1702px;top:55px;font-size:16.5px;line-height:15px;color:rgba(175,175,175,0.13);transform:rotate(-20deg);transform-origin:0 100%">ld:12026-04-17gadmin</div>
<div class="t" style="left:42px;top:185px;font-size:16.5px;line-height:15px;color:rgba(175,175,175,0.13);transform:rotate(-20deg);transform-origin:0 100%">ld:12026-04-17gadmin</div>
<div class="t" style="left:374px;top:185px;font-size:16.5px;line-height:15px;color:rgba(175,175,175,0.13);transform:rotate(-20deg);transform-origin:0 100%">ld:12026-04-17gadmin</div>
<div class="t" style="left:706px;top:185px;font-size:16.5px;line-height:15px;color:rgba(175,175,175,0.13);transform:rotate(-20deg);transform-origin:0 100%">ld:12026-04-17gadmin</div>
<div class="t" style="left:1038px;top:185px;font-size:16.5px;line-height:15px;color:rgba(175,175,175,0.13);transform:rotate(-20deg);transform-origin:0 100%">ld:12026-04-17gadmin</div>
<div class="t" style="left:1370px;top:185px;font-size:16.5px;line-height:15px;color:rgba(175,175,175,0.13);transform:rotate(-20deg);transform-origin:0 100%">ld:12026-04-17gadmin</div>
<div class="t" style="left:1702px;top:185px;font-size:16.5px;line-height:15px;color:rgba(175,175,175,0.13);transform:rotate(-20deg);transform-origin:0 100%">ld:12026-04-17gadmin</div>
<div class="t" style="left:42px;top:315px;font-size:16.5px;line-height:15px;color:rgba(175,175,175,0.13);transform:rotate(-20deg);transform-origin:0 100%">ld:12026-04-17gadmin</div>
<div class="t" style="left:374px;top:315px;font-size:16.5px;line-height:15px;color:rgba(175,175,175,0.13);transform:rotate(-20deg);transform-origin:0 100%">ld:12026-04-17gadmin</div>
<div class="t" style="left:706px;top:315px;font-size:16.5px;line-height:15px;color:rgba(175,175,175,0.13);transform:rotate(-20deg);transform-origin:0 100%">ld:12026-04-17gadmin</div>
<div class="t" style="left:1038px;top:315px;font-size:16.5px;line-height:15px;color:rgba(175,175,175,0.13);transform:rotate(-20deg);transform-origin:0 100%">ld:12026-04-17gadmin</div>
<div class="t" style="left:1370px;top:315px;font-size:16.5px;line-height:15px;color:rgba(175,175,175,0.13);transform:rotate(-20deg);transform-origin:0 100%">ld:12026-04-17gadmin</div>
<div class="t" style="left:1702px;top:315px;font-size:16.5px;line-height:15px;color:rgba(175,175,175,0.13);transform:rotate(-20deg);transform-origin:0 100%">ld:12026-04-17gadmin</div>
<div class="t" style="left:42px;top:445px;font-size:16.5px;line-height:15px;color:rgba(175,175,175,0.13);transform:rotate(-20deg);transform-origin:0 100%">ld:12026-04-17gadmin</div>
<div class="t" style="left:374px;top:445px;font-size:16.5px;line-height:15px;color:rgba(175,175,175,0.13);transform:rotate(-20deg);transform-origin:0 100%">ld:12026-04-17gadmin</div>
<div class="t" style="left:706px;top:445px;font-size:16.5px;line-height:15px;color:rgba(175,175,175,0.13);transform:rotate(-20deg);transform-origin:0 100%">ld:12026-04-17gadmin</div>
<div class="t" style="left:1038px;top:445px;font-size:16.5px;line-height:15px;color:rgba(175,175,175,0.13);transform:rotate(-20deg);transform-origin:0 100%">ld:12026-04-17gadmin</div>
<div class="t" style="left:1370px;top:445px;font-size:16.5px;line-height:15px;color:rgba(175,175,175,0.13);transform:rotate(-20deg);transform-origin:0 100%">ld:12026-04-17gadmin</div>
<div class="t" style="left:1702px;top:445px;font-size:16.5px;line-height:15px;color:rgba(175,175,175,0.13);transform:rotate(-20deg);transform-origin:0 100%">ld:12026-04-17gadmin</div>
<div class="t" style="left:42px;top:575px;font-size:16.5px;line-height:15px;color:rgba(175,175,175,0.13);transform:rotate(-20deg);transform-origin:0 100%">ld:12026-04-17gadmin</div>
<div class="t" style="left:374px;top:575px;font-size:16.5px;line-height:15px;color:rgba(175,175,175,0.13);transform:rotate(-20deg);transform-origin:0 100%">ld:12026-04-17gadmin</div>
<div class="t" style="left:706px;top:575px;font-size:16.5px;line-height:15px;color:rgba(175,175,175,0.13);transform:rotate(-20deg);transform-origin:0 100%">ld:12026-04-17gadmin</div>
<div class="t" style="left:1038px;top:575px;font-size:16.5px;line-height:15px;color:rgba(175,175,175,0.13);transform:rotate(-20deg);transform-origin:0 100%">ld:12026-04-17gadmin</div>
<div class="t" style="left:1370px;top:575px;font-size:16.5px;line-height:15px;color:rgba(175,175,175,0.13);transform:rotate(-20deg);transform-origin:0 100%">ld:12026-04-17gadmin</div>
<div class="t" style="left:1702px;top:575px;font-size:16.5px;line-height:15px;color:rgba(175,175,175,0.13);transform:rotate(-20deg);transform-origin:0 100%">ld:12026-04-17gadmin</div>
</div>
</body></html>
